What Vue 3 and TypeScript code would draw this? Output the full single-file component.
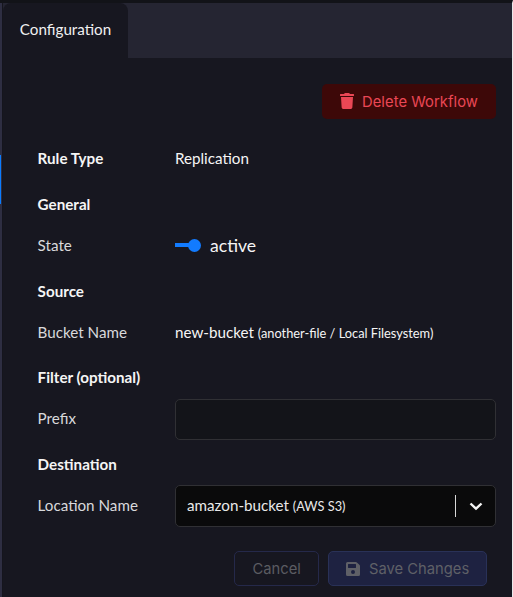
<script setup lang="ts">
import { ref } from 'vue'

const active = ref(true)
const prefix = ref('')
</script>

<template>
  <div class="screen">
    <aside class="rail"><span class="rail-marker"></span></aside>
    <main class="panel">
      <nav class="tabs">
        <button class="tab" type="button">Configuration</button>
      </nav>
      <form class="content" @submit.prevent>
        <div class="toolbar">
          <button class="btn danger" type="button">
            <svg class="trash" viewBox="0 0 14 16" aria-hidden="true">
              <path d="M.5 1H4l.6-.7Q4.900 0 5.300 0h3.400q.4 0 .7.300L10 1h3.500q.5 0 .5.500V2.500q0 .5-.5.500H.5Q0 3 0 2.500v-1Q0 1 .5 1ZM1 4h12l-.65 10.600Q12.200 16 10.850 16h-7.700Q1.800 16 1.650 14.600Z" />
            </svg>
            <span>Delete Workflow</span>
          </button>
        </div>
        <div class="row first">
          <span class="heading">Rule Type</span>
          <span class="value">Replication</span>
        </div>
        <h2 class="heading">General</h2>
        <div class="row">
          <span class="label">State</span>
          <label class="toggle" @click="active = !active">
            <span class="switch" :class="{ off: !active }"><i></i></span>
            <span class="state">{{ active ? 'active' : 'inactive' }}</span>
          </label>
        </div>
        <h2 class="heading">Source</h2>
        <div class="row">
          <span class="label">Bucket Name</span>
          <span class="value">new-bucket <small>(another-file / Local Filesystem)</small></span>
        </div>
        <h2 class="heading later">Filter (optional)</h2>
        <div class="row prefix-row">
          <label class="label" for="prefix">Prefix</label>
          <input id="prefix" v-model="prefix" class="field" type="text" />
        </div>
        <h2 class="heading destination">Destination</h2>
        <div class="row select-row">
          <span class="label">Location Name</span>
          <div class="field select">
            <span class="value">amazon-bucket <small>(AWS S3)</small></span>
            <span class="divider"></span>
            <svg class="chevron" viewBox="0 0 14 9" aria-hidden="true">
              <path d="M1.500 1.500 7 6.700l5.500-5.200" />
            </svg>
          </div>
        </div>
        <footer class="actions">
          <button class="btn cancel" type="button" disabled>Cancel</button>
          <button class="btn save" type="submit" disabled>
            <svg class="disk" viewBox="0 0 14 14" aria-hidden="true">
              <path fill-rule="evenodd" d="M1.500 0h8.400q.6 0 1 .4l2.700 2.700q.4.400.4 1v8.400q0 1.500-1.500 1.500h-11Q0 14 0 12.500v-11Q0 0 1.500 0ZM2.400 2Q2 2 2 2.400v3.200Q2 6 2.400 6h7.200q.4 0 .4-.4V2.400Q10 2 9.600 2ZM7 8a2 2 0 1 0 0 4 2 2 0 0 0 0-4Z" />
            </svg>
            <span>Save Changes</span>
          </button>
        </footer>
      </form>
    </main>
  </div>
</template>

<style>
body {
  margin: 0;
  background: #16161f;
}
</style>

<style scoped>
.screen {
  box-sizing: border-box;
  width: 513px;
  height: 597px;
  display: flex;
  overflow: hidden;
  background: #171720;
  border-top: 3px solid #121318;
  border-right: 1px solid #e8e8ea;
  color: #f5f5f5;
  font-family: Lato, sans-serif;
  font-size: 15.2px;
}
.rail {
  width: 2px;
  flex: none;
  background: #2e2e42;
  border-right: 1px solid #15151d;
}
.rail-marker {
  display: block;
  width: 1px;
  height: 49px;
  margin-top: 152px;
  background: #0a7cff;
}
.panel {
  flex: 1;
  min-width: 0;
}
.tabs {
  height: 55px;
  display: flex;
  background: #252532;
}
.tab {
  width: 125px;
  padding: 0 0 3px;
  border: 0;
  border-radius: 8px 8px 0 0;
  background: #171720;
  color: #f0f0f0;
  font: inherit;
}
.content {
  padding: 26px 16px 0 34.6px;
}
.toolbar,
.actions {
  display: flex;
  justify-content: flex-end;
}
.btn {
  box-sizing: border-box;
  height: 35px;
  display: flex;
  align-items: center;
  padding: 0;
  border: 0;
  border-radius: 5px;
  font-family: Inter, sans-serif;
  font-size: 14.75px;
  white-space: nowrap;
}
.danger {
  width: 174px;
  padding-left: 18px;
  background: #3d0808;
  color: #ea4755;
  letter-spacing: 0.06px;
}
.trash {
  width: 14px;
  height: 16px;
  margin: 0 8px 1px 0;
  fill: currentColor;
}
.row {
  height: 41px;
  display: flex;
  align-items: center;
}
.first {
  margin-top: 18px;
}
.row > :first-child {
  width: 137.4px;
  flex: none;
}
.heading {
  height: 18px;
  margin: 0;
  font-size: 15.2px;
  line-height: 18px;
  font-weight: 700;
}
h2.heading {
  margin: 17px 0 11px;
}
h2.later {
  margin-top: 16px;
}
h2.destination {
  margin-top: 15px;
}
.label {
  color: #d9d9dc;
}
.value small {
  font-size: 12.8px;
}
.toggle {
  display: flex;
  align-items: center;
  gap: 9px;
  font-size: 17.6px;
}
.state {
  padding-top: 2px;
}
.switch {
  width: 26px;
  height: 13px;
  margin-top: 1px;
  display: flex;
  align-items: center;
  justify-content: flex-end;
  background: linear-gradient(#127bff, #127bff) 0 50% / 22px 4px no-repeat;
  border-radius: 3px;
}
.switch i {
  width: 13px;
  height: 13px;
  border-radius: 50%;
  background: #127bff;
}
.switch.off {
  justify-content: flex-start;
}
.prefix-row {
  margin-top: 13px;
}
.prefix-row .label {
  padding-bottom: 3px;
}
.select-row {
  height: 42px;
  margin-top: 12px;
}
.select-row .label {
  padding-bottom: 3px;
}
h2.later,
h2.destination {
  margin-bottom: 0;
}
.field {
  box-sizing: border-box;
  flex: 1;
  min-width: 0;
  height: 41px;
  border: 1px solid #303034;
  border-radius: 5px;
  background: #131419;
  color: inherit;
  font: inherit;
  outline: 0;
}
.select {
  height: 42px;
  display: flex;
  align-items: center;
  padding: 0 12px 0 11px;
  background: #0a0a0b;
}
.select .value {
  flex: 1;
  padding-bottom: 2px;
  color: #e9e9e9;
}
.divider {
  width: 1px;
  height: 22px;
  background: #d8d8d8;
  margin-right: 13px;
}
.chevron {
  width: 14px;
  height: 9px;
  margin-top: 1px;
  fill: none;
  stroke: #f4f4f4;
  stroke-width: 2.4;
}
.actions {
  margin-top: 24px;
  padding-right: 9px;
  gap: 9px;
}
.cancel {
  width: 85px;
  padding-left: 17.5px;
  border: 1px solid #25294a;
  background: transparent;
  color: #5b5c62;
}
.save {
  width: 159px;
  padding-left: 17px;
  border: 1px solid #293157;
  background: #1e2241;
  color: #5f6067;
}
.disk {
  width: 14px;
  height: 14px;
  margin-right: 9px;
  fill: currentColor;
}
</style>
